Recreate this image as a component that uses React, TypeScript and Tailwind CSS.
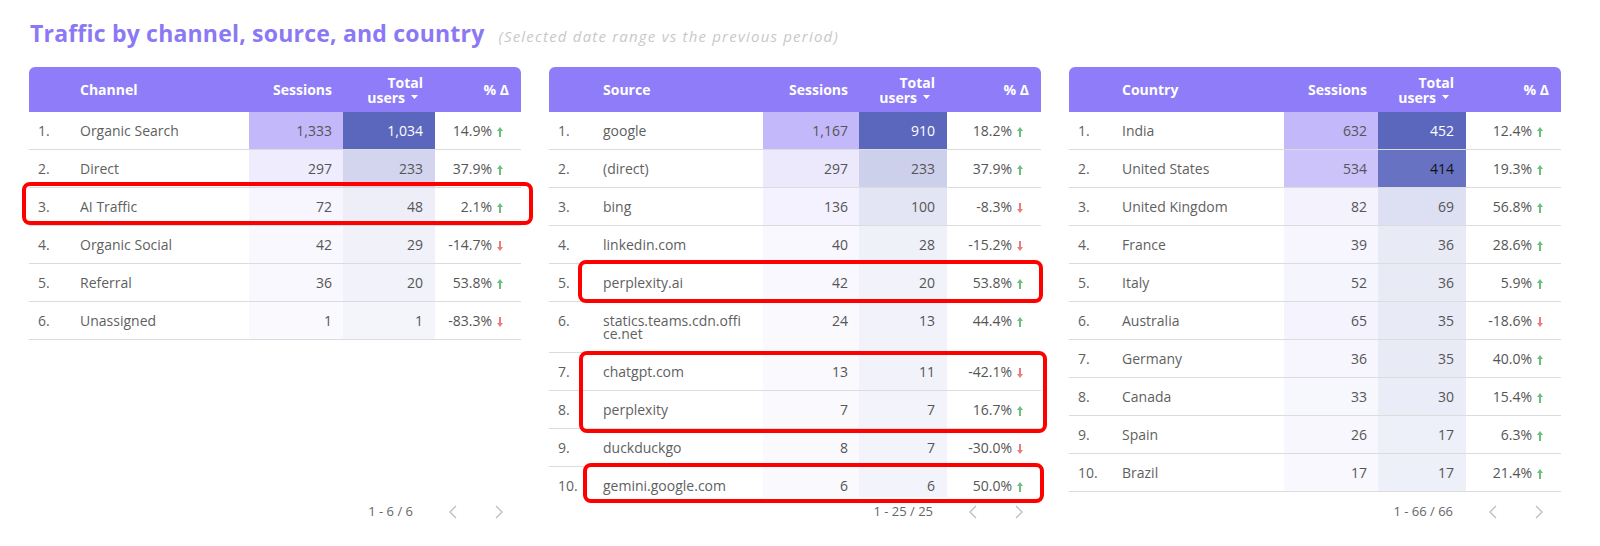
type Row = { label: string; sessions: number; users: number; pct: string; up: boolean };

interface TableProps {
  title: string;
  cols: string;
  rows: Row[];
  pager: string;
}

const channel: Row[] = [
  { label: "Organic Search", sessions: 1333, users: 1034, pct: "14.9%", up: true },
  { label: "Direct", sessions: 297, users: 233, pct: "37.9%", up: true },
  { label: "AI Traffic", sessions: 72, users: 48, pct: "2.1%", up: true },
  { label: "Organic Social", sessions: 42, users: 29, pct: "-14.7%", up: false },
  { label: "Referral", sessions: 36, users: 20, pct: "53.8%", up: true },
  { label: "Unassigned", sessions: 1, users: 1, pct: "-83.3%", up: false },
];

const source: Row[] = [
  { label: "google", sessions: 1167, users: 910, pct: "18.2%", up: true },
  { label: "(direct)", sessions: 297, users: 233, pct: "37.9%", up: true },
  { label: "bing", sessions: 136, users: 100, pct: "-8.3%", up: false },
  { label: "linkedin.com", sessions: 40, users: 28, pct: "-15.2%", up: false },
  { label: "perplexity.ai", sessions: 42, users: 20, pct: "53.8%", up: true },
  { label: "statics.teams.cdn.offi\u200Bce.net", sessions: 24, users: 13, pct: "44.4%", up: true },
  { label: "chatgpt.com", sessions: 13, users: 11, pct: "-42.1%", up: false },
  { label: "perplexity", sessions: 7, users: 7, pct: "16.7%", up: true },
  { label: "duckduckgo", sessions: 8, users: 7, pct: "-30.0%", up: false },
  { label: "gemini.google.com", sessions: 6, users: 6, pct: "50.0%", up: true },
];

const country: Row[] = [
  { label: "India", sessions: 632, users: 452, pct: "12.4%", up: true },
  { label: "United States", sessions: 534, users: 414, pct: "19.3%", up: true },
  { label: "United Kingdom", sessions: 82, users: 69, pct: "56.8%", up: true },
  { label: "France", sessions: 39, users: 36, pct: "28.6%", up: true },
  { label: "Italy", sessions: 52, users: 36, pct: "5.9%", up: true },
  { label: "Australia", sessions: 65, users: 35, pct: "-18.6%", up: false },
  { label: "Germany", sessions: 36, users: 35, pct: "40.0%", up: true },
  { label: "Canada", sessions: 33, users: 30, pct: "15.4%", up: true },
  { label: "Spain", sessions: 26, users: 17, pct: "6.3%", up: true },
  { label: "Brazil", sessions: 17, users: 17, pct: "21.4%", up: true },
];

// mix two rgb colours by t (0..1)
function mix(a: number[], b: number[], t: number) {
  const c = a.map((v, i) => Math.round(v + (b[i] - v) * t));
  return `rgb(${c[0]}, ${c[1]}, ${c[2]})`;
}

const fmt = (n: number) => n.toLocaleString("en-US");

function Arrow({ up }: { up: boolean }) {
  return (
    <svg width="6" height="10" viewBox="0 0 6 10" className="ml-[5px] mt-[3px] shrink-0">
      {up ? (
        <path d="M3 0 L6 4 H4 V10 H2 V4 H0 Z" fill="#6cc07c" />
      ) : (
        <path d="M3 10 L6 6 H4 V0 H2 V6 H0 Z" fill="#ec7b7b" />
      )}
    </svg>
  );
}

function DataTable({ title, cols, rows, pager }: TableProps) {
  const maxS = Math.max(...rows.map((r) => r.sessions));
  const maxU = Math.max(...rows.map((r) => r.users));

  return (
    <div className="w-[492px] flex flex-col">
      {/* header */}
      <div className={`grid ${cols} h-[45px] bg-[#8e7cf8] rounded-t-[6px] text-white font-bold text-[14px] leading-[15px] items-center`}>
        <div />
        <div>{title}</div>
        <div className="text-right pr-[11px]">Sessions</div>
        <div className="text-right pr-[12px] flex flex-col items-end">
          <span>Total</span>
          <span className="flex items-center">
            users
            <svg width="7" height="4" viewBox="0 0 7 4" className="ml-[6px] mr-[5px]">
              <path d="M0 0 H7 L3.5 4 Z" fill="#fff" />
            </svg>
          </span>
        </div>
        <div className="text-right pr-[12px]">% Δ</div>
      </div>

      {/* body */}
      <div className="h-[385px] overflow-hidden">
        {rows.map((r, i) => {
          const ts = r.sessions / maxS;
          const tu = r.users / maxU;
          const userText = tu >= 0.99 ? "#ffffff" : tu > 0.5 ? "#111111" : "#555555";
          return (
            <div key={i} className={`grid ${cols} border-b border-[#dcdcdc] text-[14px] leading-[13px] text-[#5f5f5f]`}>
              <div className="py-[12px] pl-[9px]">{i + 1}.</div>
              <div className="py-[12px] pr-[6px]">{r.label}</div>
              <div
                className="py-[12px] pr-[11px] text-right text-[#555]"
                style={{ backgroundColor: mix([250, 250, 254], [195, 185, 250], ts) }}
              >
                {fmt(r.sessions)}
              </div>
              <div
                className="py-[12px] pr-[12px] text-right"
                style={{ backgroundColor: mix([244, 245, 251], [91, 102, 189], tu), color: userText }}
              >
                {fmt(r.users)}
              </div>
              <div className="py-[12px] pr-[18px] flex justify-end items-start text-[#555]">
                {r.pct}
                <Arrow up={r.up} />
              </div>
            </div>
          );
        })}
      </div>

      {/* pagination */}
      <div className="flex justify-end items-center h-[30px] pr-[10px] text-[13px] text-[#666]">
        <span>{pager}</span>
        <span className="ml-[27px] w-[24px] flex justify-center">
          <svg width="9" height="14" viewBox="0 0 9 14">
            <path d="M8 1 L2 7 L8 13" fill="none" stroke="#bdbdbd" strokeWidth="1.3" />
          </svg>
        </span>
        <span className="ml-[23px] w-[24px] flex justify-center">
          <svg width="9" height="14" viewBox="0 0 9 14">
            <path d="M1 1 L7 7 L1 13" fill="none" stroke="#bdbdbd" strokeWidth="1.3" />
          </svg>
        </span>
      </div>
    </div>
  );
}

export default function App() {
  return (
    <div className="relative w-[1600px] h-[546px] bg-white font-['Open_Sans',sans-serif] overflow-hidden">
      {/* title */}
      <div className="flex items-baseline pl-[30px] pt-[19px] h-[48px]">
        <h1 className="text-[23px] leading-[29px] font-bold tracking-[0.2px] text-[#8b78f5]">
          Traffic by channel, source, and country
        </h1>
        <span className="ml-[14px] text-[15px] italic tracking-[1.2px] text-[#c8c8c8]">
          (Selected date range vs the previous period)
        </span>
      </div>

      {/* tables */}
      <div className="flex gap-[28px] pl-[29px] mt-[19px]">
        <DataTable title="Channel" cols="grid-cols-[51px_169px_94px_92px_86px]" rows={channel} pager="1 - 6 / 6" />
        <DataTable title="Source" cols="grid-cols-[54px_160px_96px_88px_94px]" rows={source} pager="1 - 25 / 25" />
        <DataTable title="Country" cols="grid-cols-[53px_162px_94px_88px_95px]" rows={country} pager="1 - 66 / 66" />
      </div>

      {/* red highlight annotations */}
      <div className="absolute left-[22px] top-[182px] w-[511px] h-[43px] border-[4px] border-[#ff0000] rounded-[8px]" />
      <div className="absolute left-[578px] top-[260px] w-[465px] h-[43px] border-[4px] border-[#ff0000] rounded-[8px]" />
      <div className="absolute left-[579px] top-[351px] w-[468px] h-[82px] border-[4px] border-[#ff0000] rounded-[8px]" />
      <div className="absolute left-[583px] top-[463px] w-[461px] h-[40px] border-[4px] border-[#ff0000] rounded-[8px]" />
    </div>
  );
}
